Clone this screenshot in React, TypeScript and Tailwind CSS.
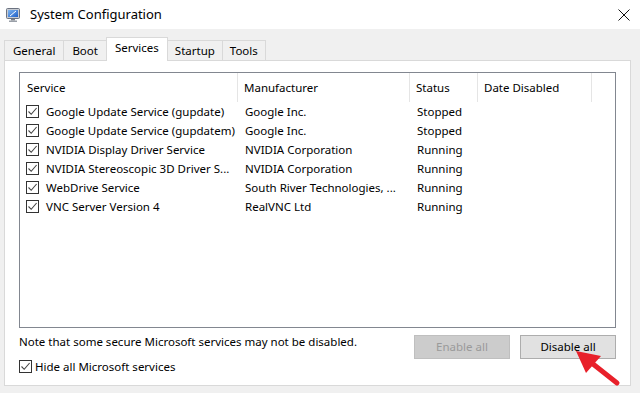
import React from "react";

const rows = [
  ["Google Update Service (gupdate)", "Google Inc.", "Stopped"],
  ["Google Update Service (gupdatem)", "Google Inc.", "Stopped"],
  ["NVIDIA Display Driver Service", "NVIDIA Corporation", "Running"],
  ["NVIDIA Stereoscopic 3D Driver S...", "NVIDIA Corporation", "Running"],
  ["WebDrive Service", "South River Technologies, ...", "Running"],
  ["VNC Server Version 4", "RealVNC Ltd", "Running"],
];

function Check() {
  return (
    <div className="w-[13px] h-[13px] border border-[#333333] bg-white flex items-center justify-center shrink-0">
      <svg width="11" height="11" viewBox="0 0 11 11">
        <path d="M1.5 5.5 L4.2 8.3 L9.6 2" fill="none" stroke="#444444" strokeWidth="1.1" />
      </svg>
    </div>
  );
}

function AppIcon() {
  return (
    <svg width="14" height="14" viewBox="0 0 14 14">
      <defs>
        <linearGradient id="scr" x1="0" y1="0" x2="1" y2="1">
          <stop offset="0" stopColor="#7fb6f0" />
          <stop offset="1" stopColor="#1f5fc8" />
        </linearGradient>
      </defs>
      <rect x="0.5" y="0.5" width="13" height="10" rx="1" fill="#c8ccd2" stroke="#6b7280" strokeWidth="1" />
      <rect x="2" y="2" width="10" height="7" fill="url(#scr)" />
      <path d="M4 8 L10 3" stroke="#ffffff" strokeWidth="1" />
      <rect x="5" y="11" width="4" height="1.5" fill="#7a7f87" />
      <rect x="3" y="12.5" width="8" height="1.5" fill="#9aa0a8" />
    </svg>
  );
}

export default function App() {
  const font = { fontFamily: '"Noto Sans", "Open Sans", sans-serif' };
  return (
    <div className="w-[640px] h-[393px] bg-[#f0f0f0] relative overflow-hidden text-[11.5px] text-black" style={font}>
      {/* Title bar */}
      <div className="h-[29px] bg-white flex items-center pl-[6px] pr-[10px]">
        <AppIcon />
        <span className="ml-[10px] text-[13px] leading-none text-black">System Configuration</span>
        <div className="ml-auto">
          <svg width="12" height="12" viewBox="0 0 12 12">
            <path d="M0.5 0.5 L11.5 11.5 M11.5 0.5 L0.5 11.5" stroke="#111" strokeWidth="1" />
          </svg>
        </div>
      </div>

      {/* Tabs */}
      <div className="pt-[8px] pl-[4px] flex items-end h-[31px] relative z-10">
        {["General", "Boot"].map((t) => (
          <div key={t} className="h-[20px] px-[8px] border border-b-0 border-[#d9d9d9] bg-[#f0f0f0] flex items-center -mr-px leading-none">
            {t}
          </div>
        ))}
        <div className="h-[24px] px-[8px] border border-b-0 border-[#d9d9d9] bg-white flex items-center -mb-px pb-[3px] leading-none relative z-10">
          Services
        </div>
        {["Startup", "Tools"].map((t) => (
          <div key={t} className="h-[20px] px-[7px] border border-b-0 border-[#d9d9d9] bg-[#f0f0f0] flex items-center -ml-px leading-none">
            {t}
          </div>
        ))}
      </div>

      {/* Panel */}
      <div className="ml-[4px] w-[627px] h-[326px] bg-white border border-[#d9d9d9] px-[14px] pt-[11px]">
        <div className="h-[256px] border border-[#828790] bg-white">
          <div className="flex h-[29px] items-center">
            <div className="w-[218px] h-full pl-[7px] flex items-center border-r border-[#e5e5e5]">Service</div>
            <div className="w-[172px] h-full pl-[6px] flex items-center border-r border-[#e5e5e5]">Manufacturer</div>
            <div className="w-[68px] h-full pl-[6px] flex items-center border-r border-[#e5e5e5]">Status</div>
            <div className="w-[114px] h-full pl-[6px] flex items-center border-r border-[#e5e5e5]">Date Disabled</div>
          </div>
          {rows.map((r, i) => (
            <div key={i} className="flex h-[19px] items-center">
              <div className="w-[218px] pl-[6px] flex items-center gap-[7px] whitespace-nowrap">
                <Check />
                <span>{r[0]}</span>
              </div>
              <div className="w-[172px] pl-[7px] whitespace-nowrap">{r[1]}</div>
              <div className="w-[68px] pl-[7px]">{r[2]}</div>
            </div>
          ))}
        </div>

        <div className="flex mt-[8px]">
          <div className="flex flex-col">
            <div className="leading-[16px] -mt-[2px]">Note that some secure Microsoft services may not be disabled.</div>
            <div className="flex items-center gap-[3px] mt-[8px]">
              <Check />
              <span>Hide all Microsoft services</span>
            </div>
          </div>
          <div className="ml-auto flex gap-[10px] -mt-px">
            <div className="w-[96px] h-[24px] bg-[#cccccc] border border-[#bfbfbf] text-[#9a9a9a] flex items-center justify-center">Enable all</div>
            <div className="w-[96px] h-[24px] bg-[#e1e1e1] border border-[#adadad] flex items-center justify-center">Disable all</div>
          </div>
        </div>
      </div>

      {/* Red arrow overlay */}
      <svg className="absolute left-[560px] top-[340px]" width="80" height="53" viewBox="0 0 80 53">
        <path d="M57 43 L33 24" stroke="#e8202a" strokeWidth="5" strokeLinecap="round" />
        <path d="M16 11 L41 16 L26 33 Z" fill="#e8202a" />
      </svg>
    </div>
  );
}
